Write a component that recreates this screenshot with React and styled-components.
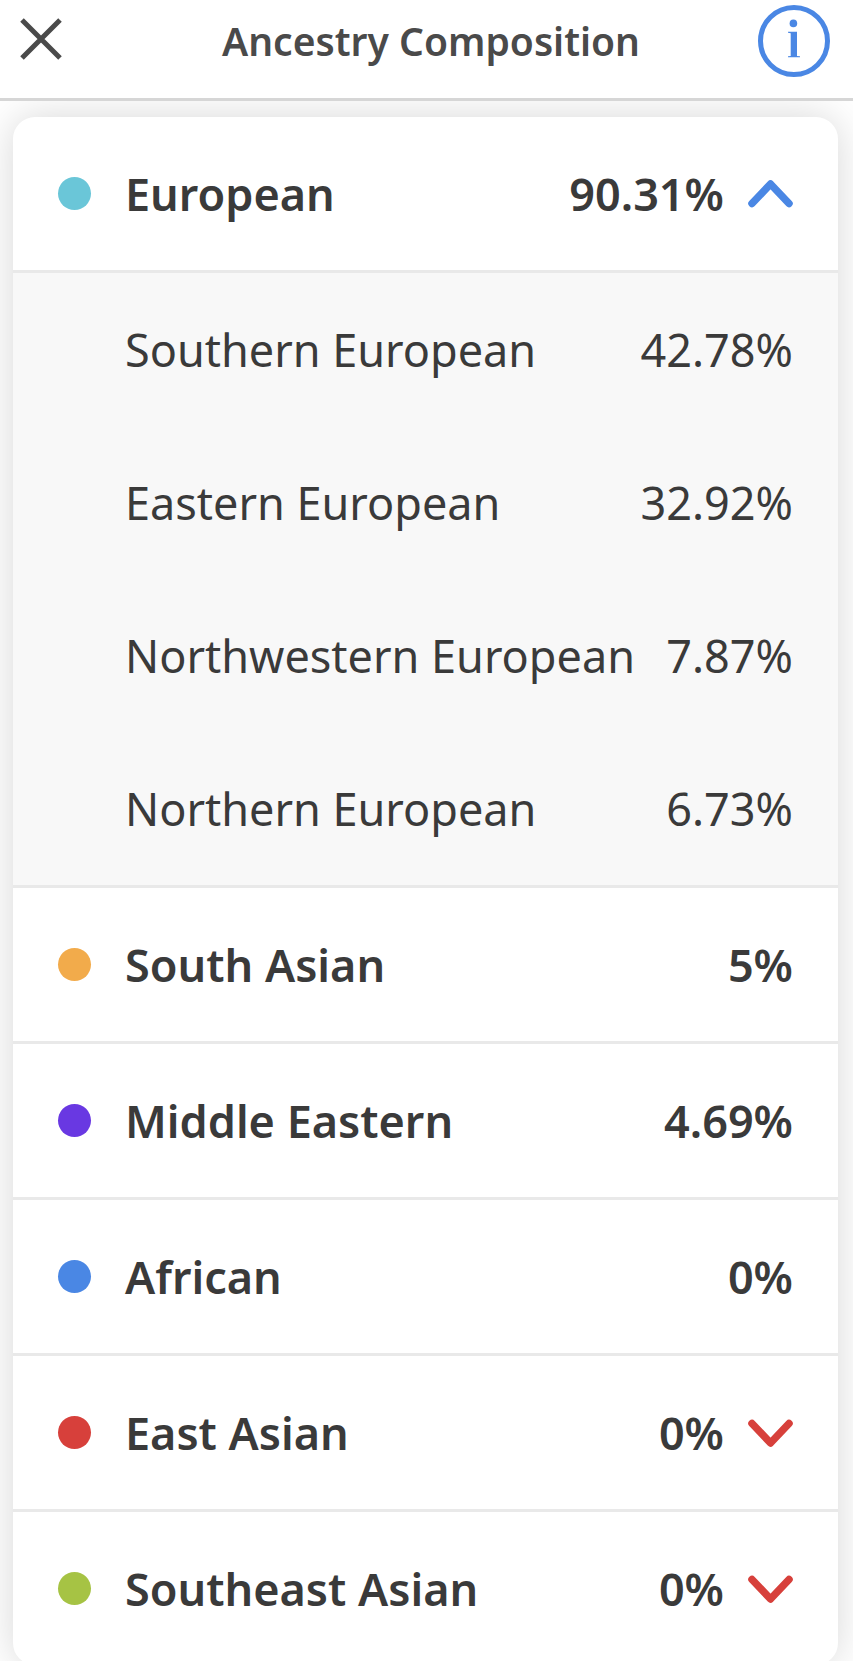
import React, { useState } from 'react';
import styled, { createGlobalStyle } from 'styled-components';

const GlobalStyle = createGlobalStyle`
  * {
    box-sizing: border-box;
  }
  body {
    margin: 0;
    background: #fff;
    color: #3a3a3a;
    font-family: 'Noto Sans', 'Open Sans', sans-serif;
  }
`;
const Header = styled.header`
  position: relative;
  z-index: 1;
  display: flex;
  align-items: center;
  justify-content: space-between;
  height: 101px;
  padding: 0 23px 16px 20px;
  background: #fff;
  border-bottom: 3px solid #d6d6d6;
`;
const Title = styled.h1`
  margin: 0;
  font-size: 39px;
  line-height: 56px;
  font-weight: 600;
  color: #4a4a4a;
`;
const IconButton = styled.button`
  display: flex;
  width: ${props => props.$width};
  padding: 0;
  border: 0;
  background: none;
  cursor: pointer;
`;
const Card = styled.main`
  margin: 16px 15px 0 13px;
  background: #fff;
  border-radius: 22px;
  box-shadow: 0 0 40px rgba(0, 0, 0, 0.16);
  overflow: hidden;
`;
const Group = styled.section`
  & + & {
    border-top: 3px solid #e9e9e9;
  }
`;
const Row = styled.div`
  display: flex;
  align-items: center;
  width: 100%;
  height: 153px;
  padding: 0 45px;
  border: 0;
  background: none;
  color: inherit;
  font-family: inherit;
  font-size: 45px;
  line-height: 60px;
  font-weight: ${props => (props.$light ? 400 : 600)};
  text-align: left;
`;
const Dot = styled.span`
  width: 33px;
  height: 33px;
  margin-right: 34px;
  border-radius: 50%;
  background: ${props => props.$color};
`;
const Name = styled.span`
  flex: 1;
  white-space: nowrap;
`;
const Arrow = styled.svg`
  margin-left: 24px;
`;
const Details = styled.div`
  padding-left: 67px;
  background: #f8f8f8;
  border-top: 3px solid #e9e9e9;
`;

const GROUPS = [
  {
    name: 'European',
    value: '90.31%',
    color: '#6ac6d8',
    expandable: true,
    children: [
      { name: 'Southern European', value: '42.78%' },
      { name: 'Eastern European', value: '32.92%' },
      { name: 'Northwestern European', value: '7.87%' },
      { name: 'Northern European', value: '6.73%' },
    ],
  },
  { name: 'South Asian', value: '5%', color: '#f2ab4b' },
  { name: 'Middle Eastern', value: '4.69%', color: '#6938e2' },
  { name: 'African', value: '0%', color: '#4a87e4' },
  { name: 'East Asian', value: '0%', color: '#d7403b', expandable: true },
  { name: 'Southeast Asian', value: '0%', color: '#a6c344', expandable: true },
];

const Chevron = ({ up }) => (
  <Arrow width="45" height="28" viewBox="0 0 45 28" fill="none" aria-hidden="true">
    <path
      d={up ? 'M4 23.5L22.5 4L41 23.5' : 'M4 4.5L22.5 24L41 4.5'}
      stroke={up ? '#4a87e4' : '#d7403b'}
      strokeWidth="7.5"
      strokeLinecap="round"
      strokeLinejoin="round"
    />
  </Arrow>
);

const AncestryGroup = ({ name, value, color, expandable, children, defaultOpen }) => {
  const [open, setOpen] = useState(defaultOpen);
  const toggle = expandable
    ? { as: 'button', type: 'button', 'aria-expanded': open, onClick: () => setOpen(!open) }
    : {};

  return (
    <Group>
      <Row {...toggle}>
        <Dot $color={color} />
        <Name>{name}</Name>
        <span>{value}</span>
        {expandable && <Chevron up={open} />}
      </Row>
      {open && children && (
        <Details>
          {children.map(child => (
            <Row key={child.name} $light>
              <Name>{child.name}</Name>
              <span>{child.value}</span>
            </Row>
          ))}
        </Details>
      )}
    </Group>
  );
}

const App = () => (
  <>
    <GlobalStyle />
    <Header>
      <IconButton type="button" aria-label="Close" $width="84px">
        <svg width="42" height="46" viewBox="0 0 42 46" fill="none">
          <path d="M2 2L40 40M40 2L2 40" stroke="#4a4a4a" strokeWidth="5" />
        </svg>
      </IconButton>
      <Title>Ancestry Composition</Title>
      <IconButton type="button" aria-label="Information" $width="72px">
        <svg width="72" height="72" viewBox="0 0 72 72" fill="none">
          <circle cx="36" cy="36" r="33.5" stroke="#4a87e4" strokeWidth="5" />
          <circle cx="35.4" cy="18.4" r="3.8" fill="#4a87e4" />
          <path d="M30 26.7H39V51L42 51.3V52.3H30V51.3L32.7 51V28.2L30 27.8Z" fill="#4a87e4" />
        </svg>
      </IconButton>
    </Header>
    <Card>
      {GROUPS.map(group => (
        <AncestryGroup key={group.name} {...group} defaultOpen={group.name === 'European'} />
      ))}
    </Card>
  </>
);

export default App;
